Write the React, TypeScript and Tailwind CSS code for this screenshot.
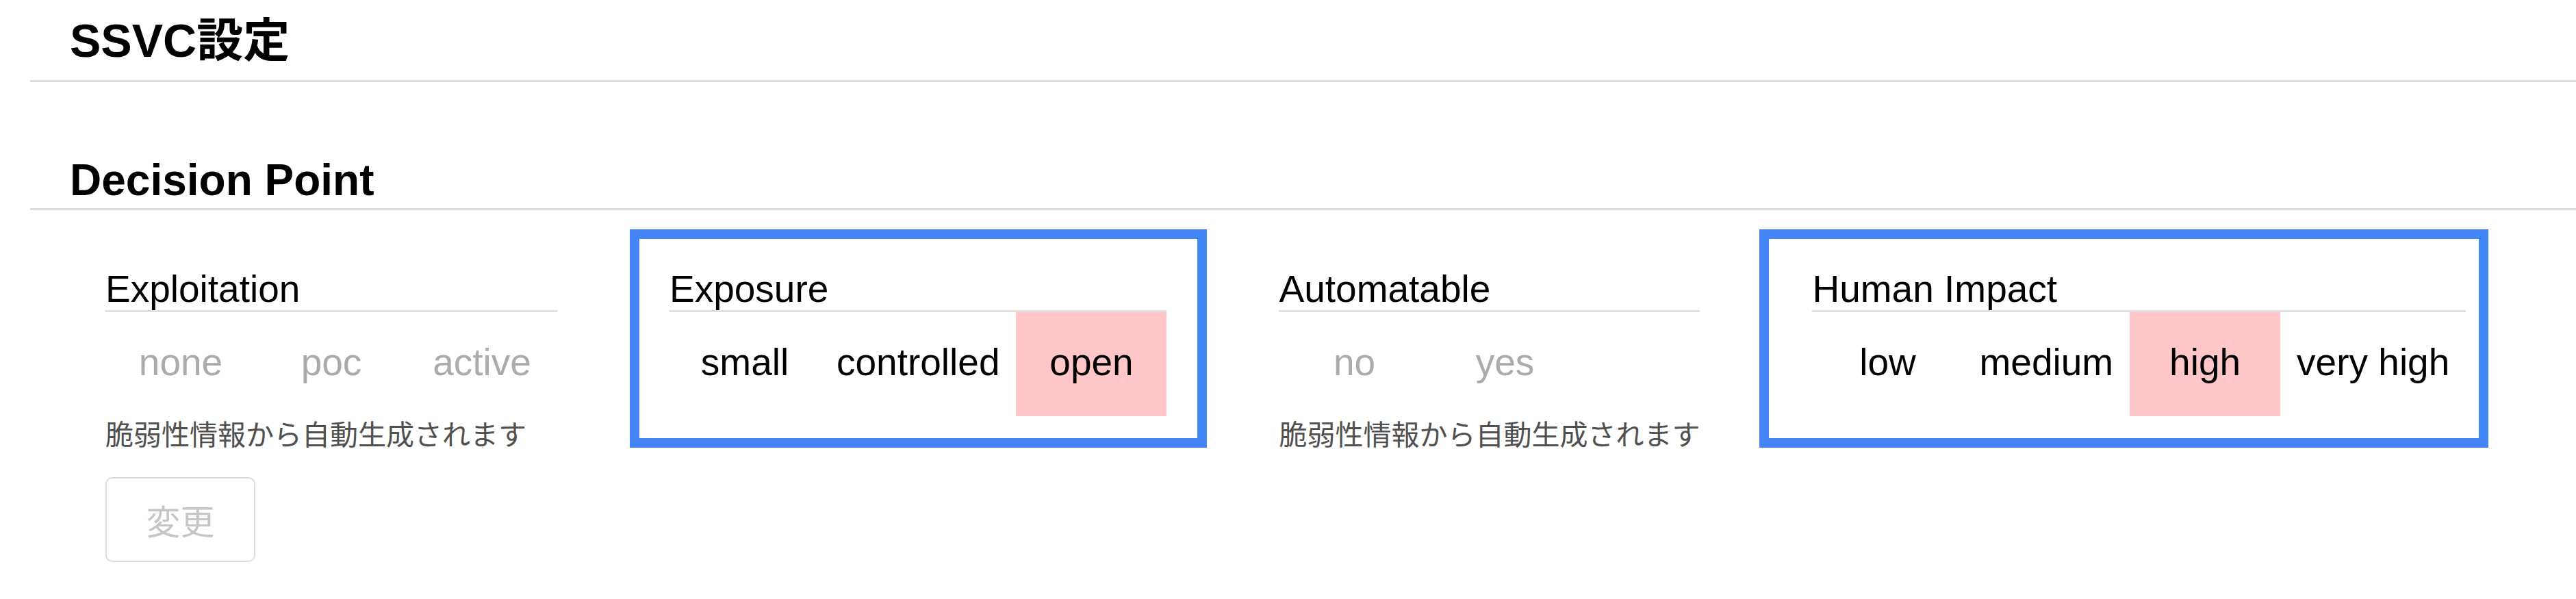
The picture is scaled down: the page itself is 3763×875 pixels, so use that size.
import React from "react"

type Option = { label: string; selected?: boolean }

interface DecisionPointProps {
  title: string
  options: Option[]
  disabled?: boolean
  note?: string
  showButton?: boolean
  highlight?: string
}

function DecisionPoint({ title, options, disabled, note, showButton, highlight }: DecisionPointProps) {
  return (
    <div className="relative flex flex-col">
      {/* annotation frame drawn over the column */}
      {highlight && <div className={highlight} />}

      <div className="text-[55px] leading-none pb-[3px] border-b-[3px] border-[#e0e0e0] whitespace-nowrap">
        {title}
      </div>

      <div className="flex">
        {options.map((o) => (
          <div
            key={o.label}
            className={
              "h-[152px] pt-[46px] min-w-[220px] px-[24px] text-center text-[55px] leading-none whitespace-nowrap " +
              (o.selected ? "bg-[#ffc7c7] " : "") +
              (disabled ? "text-[#ababab]" : "text-black")
            }
          >
            {o.label}
          </div>
        ))}
      </div>

      {note && (
        <div className="mt-[4px] text-[41px] leading-none text-[#505050] whitespace-nowrap font-['Noto_Sans_CJK_JP',sans-serif]">
          {note}
        </div>
      )}

      {showButton && (
        <button className="mt-[44px] w-[219px] h-[124px] border-2 border-[#dedede] rounded-[10px] bg-white flex items-center justify-center text-[50px] text-[#c6c6c6] font-['Noto_Sans_CJK_JP',sans-serif]">
          変更
        </button>
      )}
    </div>
  )
}

export default function App() {
  const note = "脆弱性情報から自動生成されます"

  return (
    <div className="min-h-[875px] bg-white text-black pl-[44px] pt-[25px] font-['Liberation_Sans','Noto_Sans_CJK_JP',sans-serif]">
      <div className="border-b-[3px] border-[#dcdcdc] pb-[24px] pl-[58px]">
        <h1 className="text-[68px] font-bold leading-none">SSVC設定</h1>
      </div>

      <div className="mt-[111px] border-b-[3px] border-[#dcdcdc] pb-[9px] pl-[58px]">
        <h2 className="text-[64px] font-bold leading-none">Decision Point</h2>
      </div>

      <div className="flex items-start gap-[164px] pl-[110px] pt-[88px]">
        <DecisionPoint
          title="Exploitation"
          disabled
          note={note}
          showButton
          options={[{ label: "none" }, { label: "poc" }, { label: "active" }]}
        />
        <DecisionPoint
          title="Exposure"
          highlight="pointer-events-none absolute -left-[58px] -top-[60px] -right-[59px] -bottom-[46px] border-[14px] border-[#4385f4]"
          options={[{ label: "small" }, { label: "controlled" }, { label: "open", selected: true }]}
        />
        <DecisionPoint
          title="Automatable"
          disabled
          note={note}
          options={[{ label: "no" }, { label: "yes" }]}
        />
        <DecisionPoint
          title="Human Impact"
          highlight="pointer-events-none absolute -left-[77px] -top-[60px] -right-[33px] -bottom-[46px] border-[14px] border-[#4385f4]"
          options={[
            { label: "low" },
            { label: "medium" },
            { label: "high", selected: true },
            { label: "very high" },
          ]}
        />
      </div>
    </div>
  )
}
